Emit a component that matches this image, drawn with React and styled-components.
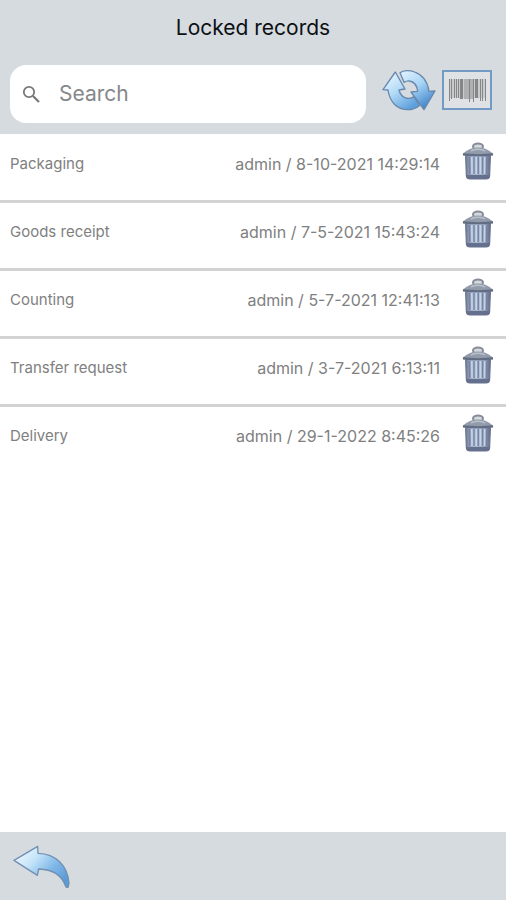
import styled, { createGlobalStyle } from "styled-components";

const GlobalStyle = createGlobalStyle`
  body {
    margin: 0;
    background-color: #ffffff;
  }

  *,
  *::before,
  *::after {
    box-sizing: border-box;
  }
`;

const Page = styled.div`
  display: flex;
  flex-direction: column;
  min-height: 100vh;
  font-family: Inter, "Liberation Sans", sans-serif;
  color: #808080;
`;

const Header = styled.header`
  padding: 12px 0 11px;
  background-color: #d6dbdf;
`;

const Title = styled.h1`
  margin: 0 0 21px;
  font-size: 21px;
  line-height: 32px;
  font-weight: 400;
  text-align: center;
  color: #0c1013;
`;

const Toolbar = styled.div`
  display: flex;
  align-items: flex-start;
  padding: 0 14px 0 10px;
`;

const SearchBox = styled.label`
  display: flex;
  flex: 1;
  align-items: center;
  gap: 18px;
  min-width: 0;
  height: 58px;
  margin-right: 16px;
  padding: 0 12px;
  border-radius: 16px;
  background-color: #ffffff;
`;

const SearchInput = styled.input`
  flex: 1;
  min-width: 0;
  padding: 0;
  border: none;
  outline: none;
  background: none;
  font-family: inherit;
  font-size: 21px;
  line-height: 32px;
  color: #33383c;

  &::placeholder {
    color: #85888a;
    opacity: 1;
  }
`;

const ToolbarActions = styled.div`
  display: flex;
  gap: 6px;
  padding-top: 4px;
`;

const IconButton = styled.button`
  display: block;
  flex: none;
  padding: 0;
  border: none;
  background: none;
  cursor: pointer;

  svg {
    display: block;
  }
`;

const RecordList = styled.ul`
  flex: 1;
  margin: 0;
  padding: 1px 0 0;
  list-style: none;
`;

const RecordRow = styled.li`
  display: flex;
  align-items: flex-start;
  gap: 22px;
  height: 68px;
  padding: 7px 12px 0 10px;
  border-bottom: 3px solid #d3d3d3;

  &:last-child {
    border-bottom: none;
  }
`;

const RecordText = styled.span`
  font-size: 16px;
  line-height: 44px;
  white-space: nowrap;
`;

const RecordName = styled(RecordText)`
  flex: 1;
  min-width: 0;
  overflow: hidden;
  text-overflow: ellipsis;
  font-size: 15px;
`;

const Footer = styled.footer`
  display: flex;
  height: 68px;
  padding: 13px;
  background-color: #d6dbdf;
`;

const records = [
  { name: "Packaging", lock: "admin / 8-10-2021 14:29:14" },
  { name: "Goods receipt", lock: "admin / 7-5-2021 15:43:24" },
  { name: "Counting", lock: "admin / 5-7-2021 12:41:13" },
  { name: "Transfer request", lock: "admin / 3-7-2021 6:13:11" },
  { name: "Delivery", lock: "admin / 29-1-2022 8:45:26" },
];

const SearchIcon = () => (
  <svg width="19" height="19" viewBox="0 0 19 19" fill="none" aria-hidden="true">
    <circle cx="7" cy="7" r="5.2" stroke="#77797b" strokeWidth="1.8" />
    <path d="M11 11L17 17" stroke="#77797b" strokeWidth="2.2" />
  </svg>
);

const RefreshIcon = () => (
  <svg width="54" height="42" viewBox="0 0 162 126" aria-hidden="true">
    <defs>
      <linearGradient id="refresh-left" x1="0" y1="0" x2="0.7" y2="1">
        <stop offset="0" stopColor="#f4fbff" />
        <stop offset="0.5" stopColor="#b5dcf7" />
        <stop offset="1" stopColor="#5c9fdc" />
      </linearGradient>
      <linearGradient id="refresh-right" x1="0" y1="0" x2="0.6" y2="1">
        <stop offset="0" stopColor="#e6f5ff" />
        <stop offset="0.5" stopColor="#a8d4f5" />
        <stop offset="1" stopColor="#4388ce" />
      </linearGradient>
    </defs>
    <g stroke="#6888ad" strokeWidth="4" strokeLinejoin="round">
      <path
        d="M40 9L3 62L18 63C23 98 45 122 77 122C91 122 102 118 112 110L96 83C78 95 56 85 51 63L69 60Z"
        fill="url(#refresh-left)"
      />
      <path
        d="M54 11C65 3 84 3 98 9C122 18 137 38 141 67L159 66L126 122L87 69L107 67C105 49 96 38 82 36C76 35 71 37 66 40Z"
        fill="url(#refresh-right)"
      />
    </g>
  </svg>
);

// x, width and height of every bar
const bars = [
  [7, 1, 22],
  [9, 1, 20],
  [12, 1, 19],
  [14, 1, 19],
  [16, 1, 19],
  [18, 3, 20],
  [27, 1, 23],
  [31, 1, 23],
  [33, 3, 19],
  [38, 1, 22],
  [40, 1, 22],
  [43, 1, 22],
];

const BarcodeIcon = () => (
  <svg width="50" height="40" viewBox="0 0 50 40" aria-hidden="true">
    <rect x="1" y="1" width="48" height="38" fill="#dfe2e4" stroke="#7399c5" strokeWidth="2" />
    <rect x="7" y="9" width="37" height="19" fill="#c9cbcd" />
    <rect x="22" y="9" width="9" height="20" fill="#aeb0b2" />
    {bars.map(([x, width, height]) => (
      <rect key={x} x={x} y="9" width={width} height={height} fill="#858688" />
    ))}
  </svg>
);

const TrashIcon = () => (
  <svg width="32" height="38" viewBox="0 0 32 38" aria-hidden="true">
    <defs>
      <linearGradient id="trash-can" x1="0" y1="0" x2="1" y2="0">
        <stop offset="0" stopColor="#717d99" />
        <stop offset="0.3" stopColor="#a9b7d1" />
        <stop offset="0.7" stopColor="#a0afcb" />
        <stop offset="1" stopColor="#606b89" />
      </linearGradient>
    </defs>
    <ellipse cx="16" cy="4.6" rx="5" ry="3" fill="#d5d8dd" stroke="#858c98" strokeWidth="2" />
    <path
      d="M3.6 13H28.4L27.6 34C27.4 36.2 26 37 24 37H8C6 37 4.6 36.2 4.4 34Z"
      fill="url(#trash-can)"
      stroke="#6a758f"
      strokeWidth="1.2"
    />
    <path d="M4.4 33H27.6C27.4 36.2 26 37 24 37H8C6 37 4.6 36.2 4.4 33Z" fill="#64708d" />
    <path d="M7.3 15L7.8 32M12 15V32M16.3 15V32M20.6 15V32M25 15L24.6 32" stroke="#75839f" strokeWidth="1.3" />
    <path d="M9.8 15L10 32M14.2 15V32M18.4 15V32M22.7 15L22.5 32" stroke="#c6d2e5" strokeWidth="1.6" />
    <path d="M1 11.4C4 10 7 5.6 16 5.6S28 10 31 11.4V13.6H1Z" fill="#929baa" />
    <path d="M9 9C11 7.6 13 7.2 16 7.2S21 7.6 23 9" fill="none" stroke="#bcc2cc" strokeWidth="1.4" />
    <path d="M1 12.2C8 13.6 24 13.6 31 12.2" fill="none" stroke="#626d83" strokeWidth="2.2" />
  </svg>
);

const BackIcon = () => (
  <svg width="58" height="44" viewBox="0 0 174 132" aria-hidden="true">
    <defs>
      <linearGradient id="back-arrow" x1="0" y1="0" x2="1" y2="0.7">
        <stop offset="0" stopColor="#ffffff" />
        <stop offset="0.4" stopColor="#c4e4f9" />
        <stop offset="0.7" stopColor="#82b9e8" />
        <stop offset="1" stopColor="#5d9bd8" />
      </linearGradient>
    </defs>
    <path
      d="M3 46L74 4L75 25C128 26 164 62 168 115L165 127L159 126C148 94 122 73 77 72L73 91Z"
      fill="url(#back-arrow)"
      stroke="#7290b3"
      strokeWidth="4"
      strokeLinejoin="round"
    />
  </svg>
);

const App = () => {
  return (
    <>
      <GlobalStyle />
      <Page>
        <Header>
          <Title>Locked records</Title>
          <Toolbar>
            <SearchBox>
              <SearchIcon />
              <SearchInput type="search" placeholder="Search" aria-label="Search" />
            </SearchBox>
            <ToolbarActions>
              <IconButton type="button" aria-label="Refresh">
                <RefreshIcon />
              </IconButton>
              <IconButton type="button" aria-label="Scan barcode">
                <BarcodeIcon />
              </IconButton>
            </ToolbarActions>
          </Toolbar>
        </Header>
        <RecordList>
          {records.map((record) => (
            <RecordRow key={record.name}>
              <RecordName>{record.name}</RecordName>
              <RecordText>{record.lock}</RecordText>
              <IconButton type="button" aria-label={`Delete ${record.name}`}>
                <TrashIcon />
              </IconButton>
            </RecordRow>
          ))}
        </RecordList>
        <Footer>
          <IconButton type="button" aria-label="Back">
            <BackIcon />
          </IconButton>
        </Footer>
      </Page>
    </>
  );
};

export default App;
